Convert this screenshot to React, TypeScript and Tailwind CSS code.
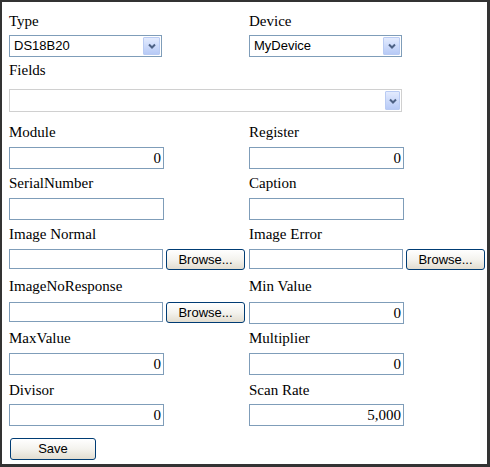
import React from "react";

const serif = "[font-family:'Liberation_Serif','Times_New_Roman',serif]";
const sans = "[font-family:'Liberation_Sans',Arial,sans-serif]";

function Label({ children }: { children: React.ReactNode }) {
  return <div className={`h-[17px] leading-[17px] text-[15px] font-normal text-black whitespace-nowrap ${serif}`}>{children}</div>;
}

function Chevron({ color }: { color: string }) {
  return (
    <svg width="8" height="6" viewBox="0 0 8 6">
      <path d="M1 1.5 L4 4.5 L7 1.5" fill="none" stroke={color} strokeWidth="2" />
    </svg>
  );
}

function Select({ value, w, mt, light }: { value: string; w: string; mt: string; light?: boolean }) {
  return (
    <div
      className={`${mt} ${w} ${light ? "h-[23px] border-[#d0d0d0]" : "h-[22px] border-[#7f9db9]"} border bg-white flex items-center`}
    >
      <span className={`flex-1 pl-[4px] text-[13px] text-black ${sans}`}>{value}</span>
      <div
        className={`${light ? "w-[15px] h-[19px]" : "w-[17px] h-[18px]"} mr-[1px] rounded-[1px] border border-[#b9cbf3] bg-linear-to-b from-[#e3ebfe] to-[#b7caf6] flex items-center justify-center`}
      >
        <Chevron color="#4d6185" />
      </div>
    </div>
  );
}

function TextBox({ value, w = "w-[155px]", h = "h-[22px]", mt = "mt-[6px]" }: { value?: string; w?: string; h?: string; mt?: string }) {
  return (
    <div
      className={`${mt} ${w} ${h} border border-[#7f9db9] bg-white flex items-center justify-end pr-[2px] text-[15px] text-black ${serif}`}
    >
      {value}
    </div>
  );
}

function Btn({ label, w, h, ml = "" }: { label: string; w: string; h: string; ml?: string }) {
  return (
    <div
      className={`${w} ${h} ${ml} rounded-[3px] border border-[#003c74] bg-linear-to-b from-[#ffffff] via-[#f4f3ee] to-[#e2ddd0] flex items-center justify-center text-[13px] text-black ${sans}`}
    >
      {label}
    </div>
  );
}

function FileBox({ mt }: { mt: string }) {
  return (
    <div className={`${mt} flex items-start gap-[3px]`}>
      <div className="w-[154px] h-[20px] border border-[#7f9db9] bg-white" />
      <Btn label="Browse..." w="w-[79px]" h="h-[21px]" />
    </div>
  );
}

function Row({ mt, children }: { mt: string; children: React.ReactNode }) {
  return <div className={`${mt} grid grid-cols-[240px_240px]`}>{children}</div>;
}

export default function App() {
  return (
    <div className={`w-[490px] h-[467px] bg-white border-solid border-[#333333] border-t-2 border-l-2 border-r-[3px] border-b-[3px] pl-[7px] pt-[11px] ${serif}`}>
      <Row mt="mt-0">
        <div>
          <Label>Type</Label>
          <Select value="DS18B20" w="w-[153px]" mt="mt-[5px]" />
        </div>
        <div>
          <Label>Device</Label>
          <Select value="MyDevice" w="w-[153px]" mt="mt-[5px]" />
        </div>
      </Row>
      <div className="mt-[5px]">
        <Label>Fields</Label>
        <Select value="" w="w-[393px]" mt="mt-[10px]" light />
      </div>
      <Row mt="mt-[12px]">
        <div>
          <Label>Module</Label>
          <TextBox value="0" />
        </div>
        <div>
          <Label>Register</Label>
          <TextBox value="0" />
        </div>
      </Row>
      <Row mt="mt-[6px]">
        <div>
          <Label>SerialNumber</Label>
          <TextBox />
        </div>
        <div>
          <Label>Caption</Label>
          <TextBox />
        </div>
      </Row>
      <Row mt="mt-[6px]">
        <div>
          <Label>Image Normal</Label>
          <FileBox mt="mt-[6px]" />
        </div>
        <div>
          <Label>Image Error</Label>
          <FileBox mt="mt-[6px]" />
        </div>
      </Row>
      <Row mt="mt-[8px]">
        <div>
          <Label>ImageNoResponse</Label>
          <FileBox mt="mt-[7px]" />
        </div>
        <div>
          <Label>Min Value</Label>
          <TextBox value="0" mt="mt-[7px]" />
        </div>
      </Row>
      <Row mt="mt-[6px]">
        <div>
          <Label>MaxValue</Label>
          <TextBox value="0" />
        </div>
        <div>
          <Label>Multiplier</Label>
          <TextBox value="0" />
        </div>
      </Row>
      <Row mt="mt-[7px]">
        <div>
          <Label>Divisor</Label>
          <TextBox value="0" mt="mt-[5px]" />
        </div>
        <div>
          <Label>Scan Rate</Label>
          <TextBox value="5,000" mt="mt-[5px]" />
        </div>
      </Row>
      <div className="mt-[12px]">
        <Btn label="Save" w="w-[86px]" h="h-[22px]" ml="ml-[1px]" />
      </div>
    </div>
  );
}
